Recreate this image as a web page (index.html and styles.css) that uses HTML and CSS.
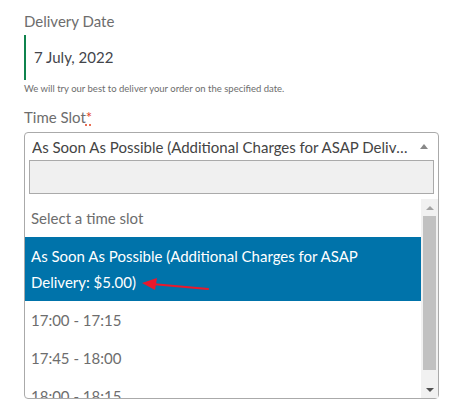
FILE: index.html
```html
<!DOCTYPE html>
<html lang="en">
<head>
<meta charset="utf-8">
<title>Delivery</title>
<link rel="stylesheet" href="styles.css">
</head>
<body>
<div class="form">
  <div class="label">Delivery Date</div>
  <div class="date">7 July, 2022</div>
  <div class="help">We will try our best to deliver your order on the specified date.</div>
  <div class="label slot-label">Time Slot<abbr class="req" title="required">*</abbr></div>
  <div class="select">
    <div class="sel-head">
      <span class="sel-text">As Soon As Possible (Additional Charges for ASAP Delivery: $5.00)</span>
      <span class="sel-arrow"></span>
    </div>
    <div class="search"><div class="search-input"></div></div>
    <div class="list">
      <div class="options">
        <div class="opt">Select a time slot</div>
        <div class="opt opt-active">As Soon As Possible (Additional Charges for ASAP Delivery: $5.00)
          <svg class="pointer" width="70" height="14" viewBox="0 0 70 14"><line x1="10" y1="6" x2="66" y2="11" stroke="#e8192c" stroke-width="2.2" stroke-linecap="round"/><polygon points="0,5 15,0 13,12" fill="#e8192c"/></svg>
        </div>
        <div class="opt">17:00 - 17:15</div>
        <div class="opt">17:45 - 18:00</div>
        <div class="opt">18:00 - 18:15</div>
      </div>
      <div class="scrollbar">
        <div class="sb-up"></div>
        <div class="sb-track"><div class="sb-thumb"></div></div>
        <div class="sb-down"></div>
      </div>
    </div>
  </div>
  <div class="edit">Edit</div>
</div>
</body>
</html>
```

FILE: styles.css
```css
html, body {
  margin: 0;
  padding: 0;
  background: #fff;
}
body {
  font-family: Lato, "Open Sans", sans-serif;
  color: #6d6d6d;
}
.form {
  padding-left: 24px;
  width: 415px;
  overflow: hidden;
  height: 417px;
}
.label {
  font-size: 15px;
  line-height: 24px;
  margin-top: 9px;
  color: #6d6d6d;
}
.req {
  color: #e2401c;
  text-decoration: underline dotted;
  text-underline-offset: 2px;
  border: 0;
  cursor: help;
}
.date {
  margin-top: 2px;
  height: 45px;
  line-height: 45px;
  border-left: 2px solid #0f834d;
  padding-left: 8px;
  font-size: 15px;
  color: #43454b;
}
.help {
  margin-top: 2px;
  font-size: 9.5px;
  line-height: 14px;
  color: #6d6d6d;
}
.slot-label {
  margin-top: 9px;
}
.select {
  margin-top: 3px;
  border: 1px solid #aaa;
  border-radius: 4px 4px 4px 4px;
  box-sizing: border-box;
  width: 415px;
  background: #fff;
}
.sel-head {
  height: 23px;
  display: flex;
  align-items: flex-start;
  padding: 0 10px 0 7px;
}
.sel-text {
  flex: 1;
  min-width: 0;
  font-size: 15px;
  line-height: 28px;
  color: #444;
  white-space: nowrap;
  overflow: hidden;
  text-overflow: ellipsis;
  padding-right: 6px;
}
.sel-arrow {
  width: 0;
  height: 0;
  margin-top: 11px;
  border-left: 4px solid transparent;
  border-right: 4px solid transparent;
  border-bottom: 5px solid #888;
}
.search {
  padding: 4px 4px 5px 4px;
}
.search-input {
  height: 34px;
  box-sizing: border-box;
  border: 1px solid #aaa;
  background: #f0f0f0;
}
.list {
  display: flex;
  height: 199px;
  overflow: hidden;
}
.options {
  flex: 1;
  min-width: 0;
}
.opt {
  font-size: 15px;
  line-height: 26px;
  padding: 6px 6px;
  color: #6d6d6d;
}
.opt-active {
  position: relative;
  background: #0073aa;
  color: #fff;
}
.pointer {
  position: absolute;
  left: 117px;
  top: 41px;
}
.scrollbar {
  width: 17px;
  display: flex;
  flex-direction: column;
  background: #f1f1f1;
}
.sb-up, .sb-down {
  height: 17px;
  display: flex;
  align-items: center;
  justify-content: center;
}
.sb-up::before {
  content: "";
  border-left: 4px solid transparent;
  border-right: 4px solid transparent;
  border-bottom: 4px solid #a3a3a3;
}
.sb-down::before {
  content: "";
  border-left: 4px solid transparent;
  border-right: 4px solid transparent;
  border-top: 4px solid #505050;
}
.sb-track {
  flex: 1;
  padding: 0 2px;
}
.sb-thumb {
  height: 154px;
  background: #c1c1c1;
}
.edit {
  margin-top: 13px;
  font-size: 15px;
  line-height: 20px;
  color: #7f54b3;
}
```
